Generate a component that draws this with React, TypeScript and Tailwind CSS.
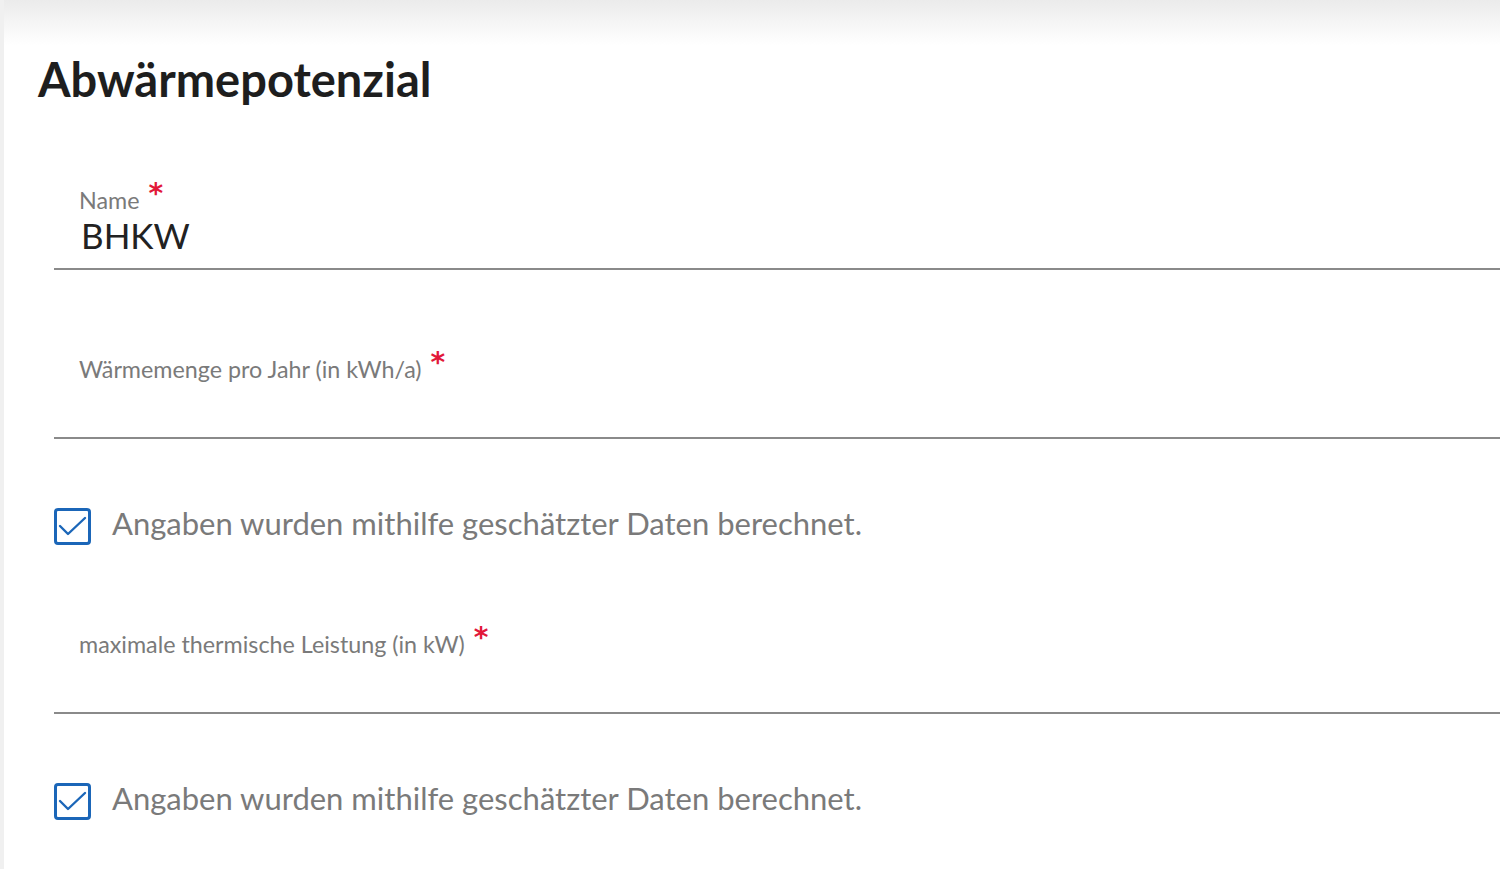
import React from "react";

function Label({ text }: { text: string }) {
  return (
    <div className="pl-[25px] h-[24px] text-[23.3px] leading-[24px] text-[#7a7a7a] whitespace-nowrap">
      {text}
      <span
        className="ml-[9px] inline-block text-[28px] font-bold leading-[16px] text-[#e2183a] -translate-y-[6px]"
        style={{ fontFamily: "'DejaVu Sans', sans-serif" }}
      >
        *
      </span>
    </div>
  );
}

function Field({ label, value, mt }: { label: string; value?: string; mt: string }) {
  return (
    <div className={`${mt} border-b-2 border-[#8a8a8a] pb-[13px]`}>
      <Label text={label} />
      <div className="mt-[3px] h-[40px] pl-[27px] text-[35px] leading-[40px] text-[#222]">{value}</div>
    </div>
  );
}

function Check() {
  return (
    <div className="mt-[69px] flex items-center gap-[21px]">
      <div className="w-[37px] h-[37px] border-[3px] border-[#1b66b8] rounded-[4px] shrink-0 flex items-center justify-center">
        <svg width="37" height="37" viewBox="0 0 37 37" className="-m-[3px]">
          <path d="M6 18 L14 26 L31 10" fill="none" stroke="#1b66b8" strokeWidth="2.4" strokeLinecap="round" strokeLinejoin="round" />
        </svg>
      </div>
      <span className="text-[31px] leading-[31px] pb-[6px] text-[#7a7a7a] whitespace-nowrap">
        Angaben wurden mithilfe geschätzter Daten berechnet.
      </span>
    </div>
  );
}

export default function App() {
  return (
    <div
      className="w-[1500px] h-[869px] overflow-hidden bg-white border-l-4 border-[#f0f0f0] bg-[linear-gradient(to_bottom,#ebebeb,#ffffff_45px)]"
      style={{ fontFamily: "Lato, 'Noto Sans', sans-serif" }}
    >
      <h1 className="pt-[51px] pl-[34px] text-[47px] leading-[56px] font-bold text-[#1e1e1e] whitespace-nowrap">
        Abwärmepotenzial
      </h1>
      <div className="ml-[50px]">
        <Field mt="mt-[81px]" label="Name" value="BHKW" />
        <Field mt="mt-[87px]" label="Wärmemenge pro Jahr (in kWh/a)" />
        <Check />
        <Field mt="mt-[87px]" label="maximale thermische Leistung (in kW)" />
        <Check />
      </div>
    </div>
  );
}
